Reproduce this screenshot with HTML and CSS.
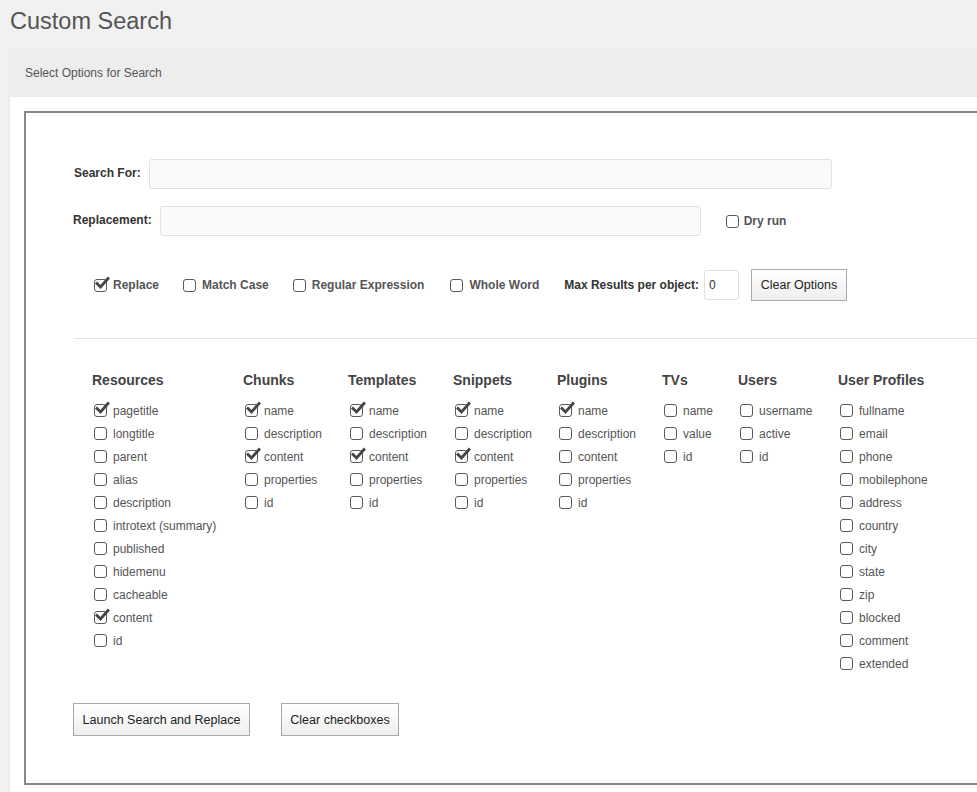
FILE: index.html
```html
<!DOCTYPE html>
<html>
<head>
<meta charset="utf-8">
<link rel="stylesheet" href="styles.css">
</head>
<body>
<div class="page">
  <h1 class="title">Custom Search</h1>
  <div class="panel">
    <div class="panel-head">Select Options for Search</div>
    <div class="panel-body">
      <div class="box">
        <div class="row">
          <label class="flabel">Search For:</label>
          <div class="input input-search"></div>
        </div>
        <div class="row row2">
          <label class="flabel">Replacement:</label>
          <div class="input input-replace"></div>
          <span class="opt dry"><span class="cb"></span><b>Dry run</b></span>
        </div>
        <div class="options">
          <span class="opt o-a"><span class="cb on"><svg viewBox="0 0 16 16"><path d="M3 7.5 L6.5 11 L14 2.5" /></svg></span><b>Replace</b></span>
          <span class="opt o-a"><span class="cb"></span><b>Match Case</b></span>
          <span class="opt o-regex"><span class="cb"></span><b>Regular Expression</b></span>
          <span class="opt"><span class="cb"></span><b>Whole Word</b></span>
          <span class="opt maxr"><b>Max Results per object:</b><span class="input input-max">0</span></span>
          <button class="btn btn-opts">Clear Options</button>
        </div>
        <div class="sep"></div>
        <div class="cols">
          <div class="col c-res">
            <div class="ch">Resources</div>
            <div class="item"><span class="cb on"><svg viewBox="0 0 16 16"><path d="M3 7.5 L6.5 11 L14 2.5" /></svg></span>pagetitle</div>
            <div class="item"><span class="cb"></span>longtitle</div>
            <div class="item"><span class="cb"></span>parent</div>
            <div class="item"><span class="cb"></span>alias</div>
            <div class="item"><span class="cb"></span>description</div>
            <div class="item"><span class="cb"></span>introtext (summary)</div>
            <div class="item"><span class="cb"></span>published</div>
            <div class="item"><span class="cb"></span>hidemenu</div>
            <div class="item"><span class="cb"></span>cacheable</div>
            <div class="item"><span class="cb on"><svg viewBox="0 0 16 16"><path d="M3 7.5 L6.5 11 L14 2.5" /></svg></span>content</div>
            <div class="item"><span class="cb"></span>id</div>
          </div>
          <div class="col c-chk">
            <div class="ch">Chunks</div>
            <div class="item"><span class="cb on"><svg viewBox="0 0 16 16"><path d="M3 7.5 L6.5 11 L14 2.5" /></svg></span>name</div>
            <div class="item"><span class="cb"></span>description</div>
            <div class="item"><span class="cb on"><svg viewBox="0 0 16 16"><path d="M3 7.5 L6.5 11 L14 2.5" /></svg></span>content</div>
            <div class="item"><span class="cb"></span>properties</div>
            <div class="item"><span class="cb"></span>id</div>
          </div>
          <div class="col c-tpl">
            <div class="ch">Templates</div>
            <div class="item"><span class="cb on"><svg viewBox="0 0 16 16"><path d="M3 7.5 L6.5 11 L14 2.5" /></svg></span>name</div>
            <div class="item"><span class="cb"></span>description</div>
            <div class="item"><span class="cb on"><svg viewBox="0 0 16 16"><path d="M3 7.5 L6.5 11 L14 2.5" /></svg></span>content</div>
            <div class="item"><span class="cb"></span>properties</div>
            <div class="item"><span class="cb"></span>id</div>
          </div>
          <div class="col c-snp">
            <div class="ch">Snippets</div>
            <div class="item"><span class="cb on"><svg viewBox="0 0 16 16"><path d="M3 7.5 L6.5 11 L14 2.5" /></svg></span>name</div>
            <div class="item"><span class="cb"></span>description</div>
            <div class="item"><span class="cb on"><svg viewBox="0 0 16 16"><path d="M3 7.5 L6.5 11 L14 2.5" /></svg></span>content</div>
            <div class="item"><span class="cb"></span>properties</div>
            <div class="item"><span class="cb"></span>id</div>
          </div>
          <div class="col c-plg">
            <div class="ch">Plugins</div>
            <div class="item"><span class="cb on"><svg viewBox="0 0 16 16"><path d="M3 7.5 L6.5 11 L14 2.5" /></svg></span>name</div>
            <div class="item"><span class="cb"></span>description</div>
            <div class="item"><span class="cb"></span>content</div>
            <div class="item"><span class="cb"></span>properties</div>
            <div class="item"><span class="cb"></span>id</div>
          </div>
          <div class="col c-tv">
            <div class="ch">TVs</div>
            <div class="item"><span class="cb"></span>name</div>
            <div class="item"><span class="cb"></span>value</div>
            <div class="item"><span class="cb"></span>id</div>
          </div>
          <div class="col c-usr">
            <div class="ch">Users</div>
            <div class="item"><span class="cb"></span>username</div>
            <div class="item"><span class="cb"></span>active</div>
            <div class="item"><span class="cb"></span>id</div>
          </div>
          <div class="col c-prof">
            <div class="ch">User Profiles</div>
            <div class="item"><span class="cb"></span>fullname</div>
            <div class="item"><span class="cb"></span>email</div>
            <div class="item"><span class="cb"></span>phone</div>
            <div class="item"><span class="cb"></span>mobilephone</div>
            <div class="item"><span class="cb"></span>address</div>
            <div class="item"><span class="cb"></span>country</div>
            <div class="item"><span class="cb"></span>city</div>
            <div class="item"><span class="cb"></span>state</div>
            <div class="item"><span class="cb"></span>zip</div>
            <div class="item"><span class="cb"></span>blocked</div>
            <div class="item"><span class="cb"></span>comment</div>
            <div class="item"><span class="cb"></span>extended</div>
          </div>
        </div>
        <div class="actions">
          <button class="btn btn-launch">Launch Search and Replace</button>
          <button class="btn btn-clear">Clear checkboxes</button>
        </div>
      </div>
    </div>
  </div>
</div>
</body>
</html>
```

FILE: styles.css
```css
html, body {
  margin: 0;
  padding: 0;
}
body {
  background: #f1f1f1;
  font-family: "Liberation Sans", Arial, sans-serif;
  overflow: hidden;
  color: #555;
}
.page {
  padding-left: 10px;
}
.title {
  margin: 0;
  padding-top: 7px;
  font-size: 23.5px;
  line-height: 28px;
  font-weight: normal;
  color: #555;
}
.panel {
  margin-top: 15px;
  width: 1010px;
  box-shadow: 0 0 2px rgba(0,0,0,0.08);
}
.panel-head {
  height: 47px;
  line-height: 46px;
  padding-left: 15px;
  font-size: 12px;
  color: #555;
  background: #ededed;
}
.panel-body {
  background: #fff;
  padding: 14px 0 8px 14px;
}
.box {
  border: 2px solid #8a8a8a;
  border-right: none;
  padding: 46px 0 47px 48px;
}
.row {
  display: flex;
  align-items: center;
  height: 30px;
}
.row2 {
  margin-top: 17px;
}
.row2 .flabel {
  margin-left: -1px;
}
.flabel {
  font-size: 12px;
  font-weight: bold;
  color: #333;
  margin-right: 8px;
  position: relative;
  top: -1px;
}
.input {
  box-sizing: border-box;
  height: 30px;
  background: #fafafa;
  border: 1px solid #e2e2e2;
  border-radius: 3px;
}
.input-search {
  width: 683px;
}
.input-replace {
  width: 541px;
}
.opt {
  display: inline-flex;
  align-items: center;
  font-size: 12px;
  color: #555;
}
.opt b {
  font-weight: bold;
}
.dry {
  margin-left: 25px;
}
.cb {
  position: relative;
  box-sizing: border-box;
  display: inline-block;
  flex: none;
  width: 13px;
  height: 13px;
  border: 1.5px solid #5a5a5a;
  border-radius: 3px;
  margin-right: 5px;
  background: #fff;
}
.cb svg {
  position: absolute;
  left: -1px;
  top: -4px;
  width: 16px;
  height: 16px;
  overflow: visible;
}
.cb svg path {
  fill: none;
  stroke: #444;
  stroke-width: 2.8;
  stroke-linecap: square;
}
.options {
  display: flex;
  align-items: center;
  margin-top: 33px;
  padding-left: 20px;
  height: 32px;
}
.options .cb {
  margin-right: 6px;
}
.options .opt {
  margin-right: 25px;
}
.options .o-a {
  margin-right: 24px;
}
.options .o-regex {
  margin-right: 26px;
}
.options .maxr {
  margin-right: 12px;
}
.maxr b {
  color: #333;
  margin-right: 5px;
}
.input-max {
  display: inline-block;
  width: 35px;
  line-height: 28px;
  padding-left: 4px;
  color: #333;
  background: #fff;
}
.btn {
  font-family: "Liberation Sans", Arial, sans-serif;
  font-size: 12.5px;
  color: #222;
  background: linear-gradient(#ffffff, #eeeeee);
  border: 1px solid #aaa;
  border-radius: 0;
  padding: 0;
  white-space: nowrap;
  text-align: center;
  cursor: pointer;
}
.btn-opts {
  height: 32px;
  width: 96px;
}
.sep {
  margin-top: 37px;
  height: 1px;
  background: #e4e4e4;
}
.cols {
  display: flex;
  margin-top: 31px;
  padding-left: 18px;
}
.col {
  flex: none;
}
.c-res { width: 151px; }
.c-chk { width: 105px; }
.c-tpl { width: 105px; }
.c-snp { width: 104px; }
.c-plg { width: 105px; }
.c-tv { width: 76px; }
.c-usr { width: 100px; }
.c-prof { width: 140px; }
.ch {
  font-size: 14px;
  font-weight: bold;
  color: #444;
  line-height: 20px;
  margin-bottom: 9px;
}
.item {
  display: flex;
  align-items: center;
  height: 23px;
  font-size: 12px;
  color: #555;
  padding-left: 2px;
}
.item .cb {
  margin-right: 6px;
}
.actions {
  display: flex;
  gap: 31px;
  margin-top: 28px;
  margin-left: -1px;
}
.btn-launch {
  height: 33px;
  width: 177px;
}
.btn-clear {
  height: 33px;
  width: 118px;
}
```
